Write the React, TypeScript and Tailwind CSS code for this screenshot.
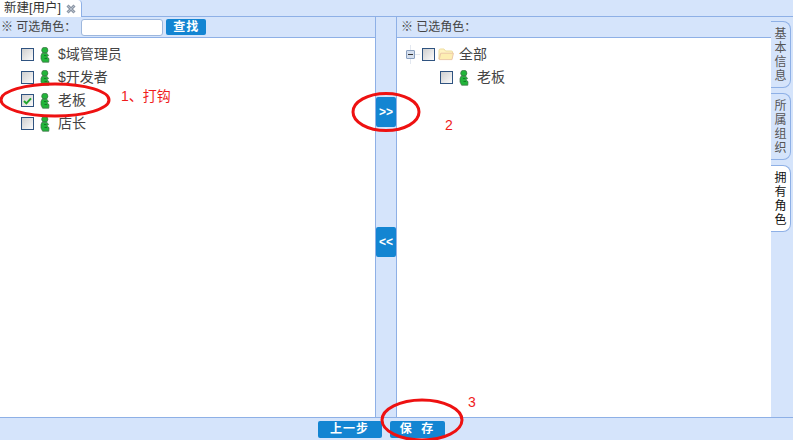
import React from "react";

const font = { fontFamily: '"Liberation Sans", "Noto Sans CJK SC", sans-serif' };

function Box({ checked }: { checked?: boolean }) {
    return (
        <span className="flex h-[13px] w-[13px] shrink-0 items-center justify-center border border-[#2f5380] bg-gradient-to-br from-[#cfcfcf] to-[#fbfbfb]">
            {checked && (
                <svg width="9" height="8" viewBox="0 0 9 8">
                    <path d="M1 4 L3.4 6.4 L8 1.4" fill="none" stroke="#22a52e" strokeWidth="2" />
                </svg>
            )}
        </span>
    );
}

function RoleIcon() {
    return (
        <svg width="10" height="16" viewBox="0 0 10 16" className="shrink-0">
            <ellipse cx="4.8" cy="3.2" rx="3.1" ry="3" fill="#22b53a" stroke="#3d6b45" strokeWidth="0.7" />
            <path d="M2 6.2 H6.8 L8.6 8.6 L6.8 9.8 L9 11.6 L8.8 15.2 H2.6 L1 12 L1 8.6 Z" fill="#22b53a" stroke="#3d6b45" strokeWidth="0.7" />
            <path d="M4 8.5 H6.4 M4.5 11.5 H7" stroke="#0f6d20" strokeWidth="0.8" />
        </svg>
    );
}

function FolderIcon() {
    return (
        <svg width="16" height="13" viewBox="0 0 16 13" className="shrink-0">
            <path d="M1 2.5 Q1 1 2.5 1 H6 L7.5 3 H13.5 Q14.5 3 14.5 4 V6 H2 L1 11 Z" fill="#fff3c2" stroke="#eedd9f" />
            <path d="M2.8 5.2 H15.4 L14 11.6 H1.2 Z" fill="#fdeeb2" stroke="#ecc8a8" />
        </svg>
    );
}

function CloseIcon() {
    return (
        <svg width="10" height="10" viewBox="0 0 10 10" className="shrink-0">
            <path d="M1.5 1.5 L8.5 8.5 M8.5 1.5 L1.5 8.5" stroke="#8d97a6" strokeWidth="3" />
            <path d="M1.5 1.5 L8.5 8.5 M8.5 1.5 L1.5 8.5" stroke="#c9d0da" strokeWidth="0.7" />
        </svg>
    );
}

function RoleRow({ label, checked }: { label: string; checked?: boolean }) {
    return (
        <div className="flex h-[23px] items-center">
            <Box checked={checked} />
            <span className="ml-[6px]"><RoleIcon /></span>
            <span className="ml-[8px] text-[14px] text-[#444]">{label}</span>
        </div>
    );
}

function SideTab({ label, active }: { label: string; active?: boolean }) {
    return (
        <div className={`flex h-[67px] w-[20px] flex-col items-center justify-center rounded-r-[8px] border border-l-0 border-[#8eb0e6] text-[12px] leading-[14px] ${active ? "bg-white text-[#111]" : "bg-[#d5e4fb] text-[#555]"}`}>
            {label.split("").map((c, i) => <span key={i}>{c}</span>)}
        </div>
    );
}

function PanelHeader({ children }: { children: React.ReactNode }) {
    return (
        <div className="flex h-[21px] shrink-0 items-center border-b border-[#8eb0e6] bg-[#d5e4fb] text-[12px] text-[#444]">
            {children}
        </div>
    );
}

function MoveButton({ label }: { label: string }) {
    return (
        <button className="flex h-[30px] w-[20px] items-center justify-center rounded-[2px] bg-[#1385d2] text-[12px] font-bold text-white">
            {label}
        </button>
    );
}

function FootButton({ label, width }: { label: string; width: string }) {
    return (
        <button className={`flex h-[17px] items-center justify-center whitespace-pre rounded-[2px] bg-[#1385d2] text-[12px] font-bold tracking-[1px] text-white ${width}`}>
            {label}
        </button>
    );
}

export default function App() {
    return (
        <div className="relative flex h-[440px] w-[793px] flex-col overflow-hidden bg-[#d5e4fb]" style={font}>
            {/* tab strip */}
            <div className="flex h-[17px] shrink-0 border-b border-[#8eb0e6]">
                <div className="flex h-[17px] w-[82px] items-center gap-[5px] rounded-tr-[4px] border-r border-[#8eb0e6] bg-white pl-[4px] text-[12.5px] text-[#333]">
                    <span>新建[用户]</span>
                    <CloseIcon />
                </div>
            </div>

            <div className="flex min-h-0 flex-1">
                <div className="flex min-w-0 flex-1">
                    {/* left list */}
                    <div className="flex w-[376px] flex-col border-r border-[#8eb0e6]">
                        <PanelHeader>
                            <span className="whitespace-pre pl-[1px]">※ 可选角色：</span>
                            <input className="ml-[5px] h-[17px] w-[82px] rounded-[3px] border border-[#9db7dd] bg-white" />
                            <button className="ml-[3px] h-[16px] w-[40px] rounded-[2px] bg-[#1385d2] text-[12px] font-bold leading-[16px] tracking-[1px] text-white">查找</button>
                        </PanelHeader>
                        <div className="flex-1 bg-white pl-[21px] pt-[5px]">
                            <RoleRow label="$域管理员" />
                            <RoleRow label="$开发者" />
                            <RoleRow label="老板" checked />
                            <RoleRow label="店长" />
                        </div>
                    </div>

                    {/* move buttons */}
                    <div className="flex w-[21px] flex-col items-start border-r border-[#8eb0e6] bg-[#d5e4fb] pt-[80px]">
                        <MoveButton label=">>" />
                        <div className="h-[100px]" />
                        <MoveButton label="<<" />
                    </div>

                    {/* right tree */}
                    <div className="flex min-w-0 flex-1 flex-col">
                        <PanelHeader>
                            <span className="whitespace-pre pl-[4px]">※ 已选角色：</span>
                        </PanelHeader>
                        <div className="flex-1 bg-white pl-[9px] pt-[5px]">
                            <div className="flex h-[23px] items-center">
                                <span className="relative flex h-[9px] w-[9px] items-center justify-center rounded-[1px] border border-[#8aa0c0] bg-[#d5dfee]">
                                    <span className="h-[1px] w-[5px] bg-[#333]" />
                                    <span className="absolute -top-[6px] left-[3px] h-[5px] w-[1px] bg-[#e3e8f0]" />
                                    <span className="absolute -bottom-[6px] left-[3px] h-[5px] w-[1px] bg-[#e3e8f0]" />
                                    <span className="absolute -right-[6px] top-[3px] h-[1px] w-[5px] bg-[#e3e8f0]" />
                                </span>
                                <span className="ml-[7px]"><Box /></span>
                                <span className="ml-[3px]"><FolderIcon /></span>
                                <span className="ml-[5px] text-[14px] text-[#444]">全部</span>
                            </div>
                            <div className="pl-[34px]">
                                <RoleRow label="老板" />
                            </div>
                        </div>
                    </div>
                </div>

                {/* side tabs */}
                <div className="flex w-[22px] shrink-0 flex-col gap-[5px] pt-[4px]">
                    <SideTab label="基本信息" />
                    <SideTab label="所属组织" />
                    <SideTab label="拥有角色" active />
                </div>
            </div>

            {/* footer */}
            <div className="flex h-[23px] shrink-0 items-center justify-center gap-[8px] border-t border-[#8eb0e6] pr-[31px]">
                <FootButton label="上一步" width="w-[64px]" />
                <FootButton label="保  存" width="w-[55px]" />
            </div>

            {/* red annotations */}
            <svg className="pointer-events-none absolute left-0 top-0" width="793" height="440">
                <ellipse cx="55" cy="100" rx="54" ry="16" fill="none" stroke="#ee1111" strokeWidth="3" />
                <ellipse cx="386" cy="112" rx="33" ry="18.5" fill="none" stroke="#ee1111" strokeWidth="3" />
                <ellipse cx="422" cy="420" rx="40" ry="20" fill="none" stroke="#ee1111" strokeWidth="3" />
            </svg>
            <span className="absolute left-[121px] top-[86px] text-[14px] text-[#f01c1c]">1、打钩</span>
            <span className="absolute left-[445px] top-[115px] text-[14px] text-[#f01c1c]">2</span>
            <span className="absolute left-[468px] top-[392px] text-[14px] text-[#f01c1c]">3</span>
        </div>
    );
}
